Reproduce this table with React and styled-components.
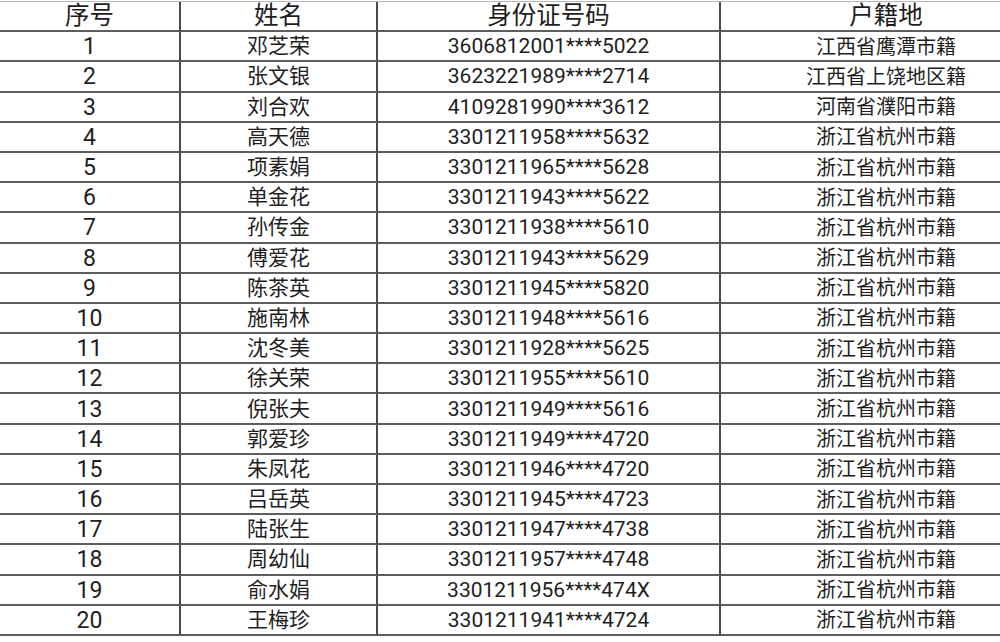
import React from "react";
import styled, { createGlobalStyle } from "styled-components";

const GlobalStyle = createGlobalStyle`
  html, body {
    margin: 0;
    padding: 0;
    background: #ffffff;
    overflow: hidden;
  }
`;

const rows = [
  ["1", "邓芝荣", "3606812001****5022", "江西省鹰潭市籍"],
  ["2", "张文银", "3623221989****2714", "江西省上饶地区籍"],
  ["3", "刘合欢", "4109281990****3612", "河南省濮阳市籍"],
  ["4", "高天德", "3301211958****5632", "浙江省杭州市籍"],
  ["5", "项素娟", "3301211965****5628", "浙江省杭州市籍"],
  ["6", "单金花", "3301211943****5622", "浙江省杭州市籍"],
  ["7", "孙传金", "3301211938****5610", "浙江省杭州市籍"],
  ["8", "傅爱花", "3301211943****5629", "浙江省杭州市籍"],
  ["9", "陈茶英", "3301211945****5820", "浙江省杭州市籍"],
  ["10", "施南林", "3301211948****5616", "浙江省杭州市籍"],
  ["11", "沈冬美", "3301211928****5625", "浙江省杭州市籍"],
  ["12", "徐关荣", "3301211955****5610", "浙江省杭州市籍"],
  ["13", "倪张夫", "3301211949****5616", "浙江省杭州市籍"],
  ["14", "郭爱珍", "3301211949****4720", "浙江省杭州市籍"],
  ["15", "朱凤花", "3301211946****4720", "浙江省杭州市籍"],
  ["16", "吕岳英", "3301211945****4723", "浙江省杭州市籍"],
  ["17", "陆张生", "3301211947****4738", "浙江省杭州市籍"],
  ["18", "周幼仙", "3301211957****4748", "浙江省杭州市籍"],
  ["19", "俞水娟", "3301211956****474X", "浙江省杭州市籍"],
  ["20", "王梅珍", "3301211941****4724", "浙江省杭州市籍"],
];

const headers = ["序号", "姓名", "身份证号码", "户籍地"];
const bodySizes = ["23px", "21px", "21px", "20px"];

const Sheet = styled.div`
  display: grid;
  grid-template-columns: 181px 197px 343px 279px;
  width: 1000px;
  margin-top: 1px;
  border-top: 1px solid #b8b8b8;
  font-family: Roboto, "Noto Sans CJK SC", sans-serif;
  color: #1e1e1e;
`;

const Cell = styled.div`
  box-sizing: border-box;
  height: 30.2px;
  display: flex;
  align-items: center;
  justify-content: center;
  border-bottom: 2px solid #5e5e5e;
  border-right: ${(p) => (p.$last ? "none" : "2px solid #4a4a4a")};
  padding: 1px 0 0 ${(p) => (p.$last ? "51px" : "0")};
  font-size: ${(p) => p.$size};
  line-height: 1;
  white-space: nowrap;
`;

export default function App() {
  return (
    <>
      <GlobalStyle />
      <Sheet>
        {headers.map((h, i) => (
          <Cell key={h} $size="24.5px" $last={i === 3}>
            {h}
          </Cell>
        ))}
        {rows.map((r) =>
          r.map((v, i) => (
            <Cell key={r[0] + "-" + i} $size={bodySizes[i]} $last={i === 3}>
              {v}
            </Cell>
          ))
        )}
      </Sheet>
    </>
  );
}
